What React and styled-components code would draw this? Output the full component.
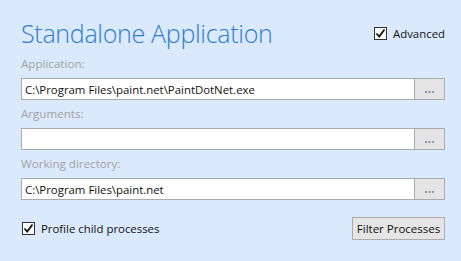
import styled, { createGlobalStyle } from 'styled-components';

const Global = createGlobalStyle`
  html, body {
    margin: 0;
    padding: 0;
    background: #dae9fc;
  }
  * { box-sizing: border-box; }
`;

export default function App() {
  return (
    <>
      <Global />
      <SPage>
        <SHeader>
          <STitle>Standalone Application</STitle>
          <SCheck>
            <SBox><CheckMark /></SBox>
            Advanced
          </SCheck>
        </SHeader>
        <Field label="Application:" value="C:\Program Files\paint.net\PaintDotNet.exe" />
        <Field label="Arguments:" value="" />
        <Field label="Working directory:" value="C:\Program Files\paint.net" />
        <SFooter>
          <SCheck>
            <SBox><CheckMark /></SBox>
            Profile child processes
          </SCheck>
          <SButton>Filter Processes</SButton>
        </SFooter>
      </SPage>
    </>
  );
}

const Field = ({ label, value }) => {
  return (
    <SField>
      <SLabel>{label}</SLabel>
      <SRow>
        <SInput readOnly value={value} />
        <SBrowse>
          <Dots />
        </SBrowse>
      </SRow>
    </SField>
  );
}

const CheckMark = () => (
  <svg width="11" height="11" viewBox="0 0 11 11">
    <path d="M1.5 5.5 L4.2 8.5 L9.5 1.5" fill="none" stroke="#111" strokeWidth="1.8" />
  </svg>
);

const Dots = () => (
  <svg width="9" height="2" viewBox="0 0 9 2">
    <rect x="0" y="0" width="2" height="2" fill="#8a8fb0" />
    <rect x="3.5" y="0" width="2" height="2" fill="#9a8f90" />
    <rect x="7" y="0" width="2" height="2" fill="#8e9aa8" />
  </svg>
);

const SPage = styled.div`
  width: 461px;
  height: 261px;
  padding: 16px 16px 0 21px;
  display: flex;
  flex-direction: column;
  font-family: "Open Sans", "Noto Sans", sans-serif;
  font-size: 11.6px;
  color: #1a1a1a;
`
const SHeader = styled.div`
  display: flex;
  justify-content: space-between;
  align-items: center;
  height: 34px;
  margin-bottom: 6px;
`
const STitle = styled.h1`
  margin: 0;
  font-family: "Open Sans", sans-serif;
  font-weight: 300;
  font-size: 25px;
  line-height: 32px;
  color: #2d7cd5;
  letter-spacing: -0.3px;
`
const SCheck = styled.label`
  display: flex;
  align-items: center;
  gap: 6px;
  font-size: 11.4px;
  color: #111;
`
const SBox = styled.span`
  width: 13px;
  height: 13px;
  border: 1px solid #333;
  background: #fff;
  display: flex;
  align-items: center;
  justify-content: center;
`
const SField = styled.div`
  display: flex;
  flex-direction: column;
  margin-bottom: 6px;
`
const SLabel = styled.div`
  line-height: 16px;
  color: #a2a2a2;
  margin-bottom: 6px;
`
const SRow = styled.div`
  display: flex;
  height: 22px;
`
const SInput = styled.input`
  flex: 1;
  min-width: 0;
  height: 22px;
  border: 1px solid #ababab;
  border-right: none;
  background: #fff;
  padding: 0 3px;
  font-family: "Open Sans", "Noto Sans", sans-serif;
  font-size: 11.4px;
  color: #111;
  outline: none;
`
const SBrowse = styled.button`
  width: 31px;
  height: 22px;
  border: 1px solid #ababab;
  background: #e4e4e4;
  display: flex;
  align-items: flex-end;
  justify-content: center;
  padding: 0 0 6px;
`
const SFooter = styled.div`
  display: flex;
  justify-content: space-between;
  align-items: center;
  margin-top: 11px;
  padding-left: 1px;
`
const SButton = styled.button`
  height: 23px;
  width: 93px;
  border: 1px solid #acacac;
  background: #e5e5e5;
  font-family: "Open Sans", "Noto Sans", sans-serif;
  font-size: 11.5px;
  color: #111;
  padding: 0;
`
